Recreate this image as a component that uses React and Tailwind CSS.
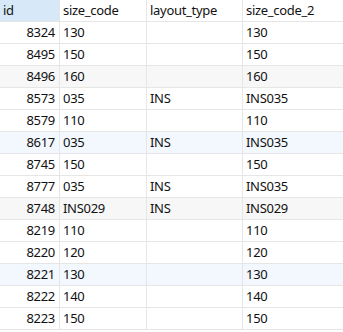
import React from "react";

const rows = [
  ["8324", "130", "", "130", ""],
  ["8495", "150", "", "150", ""],
  ["8496", "160", "", "160", "g"],
  ["8573", "035", "INS", "INS035", ""],
  ["8579", "110", "", "110", ""],
  ["8617", "035", "INS", "INS035", "b"],
  ["8745", "150", "", "150", ""],
  ["8777", "035", "INS", "INS035", ""],
  ["8748", "INS029", "INS", "INS029", "g"],
  ["8219", "110", "", "110", ""],
  ["8220", "120", "", "120", ""],
  ["8221", "130", "", "130", "b"],
  ["8222", "140", "", "140", ""],
  ["8223", "150", "", "150", ""],
];

const cell = "h-[22px] border-r border-b border-[#e6e6e6] px-[3px] leading-[21px] whitespace-nowrap overflow-hidden";

export default function App() {
  return (
    <div
      className="w-[343px] h-[332px] bg-white text-[13px] tracking-[-0.3px] text-[#111] overflow-hidden"
      style={{ fontFamily: '"Noto Sans", "Liberation Sans", sans-serif' }}
    >
      <div className="grid grid-cols-[60px_87px_96px_120px]">
        <div className={`${cell} bg-[#d7e9f8]`}>id</div>
        <div className={cell}>size_code</div>
        <div className={cell}>layout_type</div>
        <div className={cell}>size_code_2</div>
        {rows.map((r, i) => {
          const bg = r[4] === "g" ? "bg-[#f7f7f7]" : r[4] === "b" ? "bg-[#f2f8fd]" : "bg-white";
          return (
            <React.Fragment key={i}>
              <div className={`${cell} ${bg} text-right pr-[4px]`}>{r[0]}</div>
              <div className={`${cell} ${bg}`}>{r[1]}</div>
              <div className={`${cell} ${bg}`}>{r[2]}</div>
              <div className={`${cell} ${bg}`}>{r[3]}</div>
            </React.Fragment>
          );
        })}
      </div>
    </div>
  );
}
